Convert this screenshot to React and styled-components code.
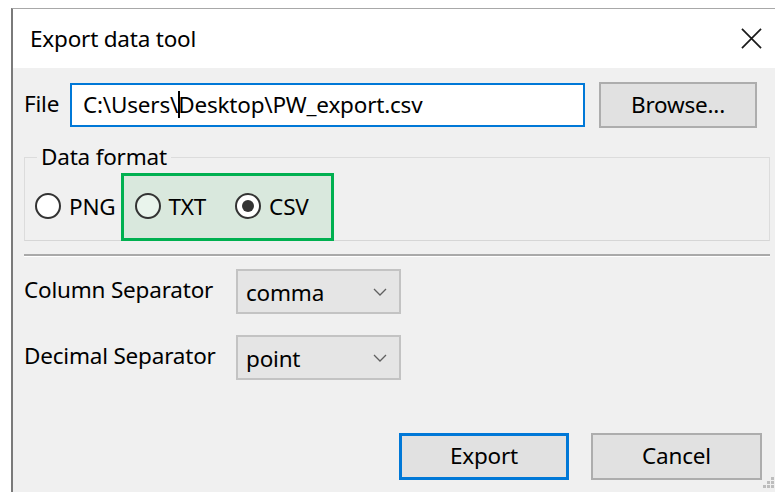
import React from 'react';
import styled, { createGlobalStyle } from 'styled-components';

// Global
const GlobalStyle = createGlobalStyle`
	html, body{
		margin: 0;
		padding: 0;
		background: #ffffff;
		overflow: hidden;
	}
	body{
		font-family: "Noto Sans", "Open Sans", sans-serif;
		color: #000000;
		line-height: 1.2;
	}
`;

// Radio
const Radio = ({ label, checked, tinted }) => (
	<RadioItem>
		<RadioCircle $checked={ checked } $tinted={ tinted } />
		<span>{ label }</span>
	</RadioItem>
);

// Combo
const Combo = ({ value }) => (
	<ComboBox>
		<span>{ value }</span>
		<svg width="14" height="8" viewBox="0 0 14 8">
			<path d="M1 1 L7 7 L13 1" fill="none" stroke="#606060" strokeWidth="1.3" />
		</svg>
	</ComboBox>
);

// Composant
const App = () => {
	return(
		<>
			<GlobalStyle/>
			<Window>

				{/* Title */}
				<TitleBar>
					<h1>Export data tool</h1>
					<svg width="21" height="21" viewBox="0 0 22 22">
						<path d="M1 1 L21 21 M21 1 L1 21" stroke="#1a1a1a" strokeWidth="1.8" />
					</svg>
				</TitleBar>
				{/* Title */}

				{/* Body */}
				<Body>

					<FileRow>
						<Label>File</Label>
						<PathInput>
							C:\Users\<Caret/>Desktop\PW_export.csv
						</PathInput>
						<Button $width={ 158 } $height={ 46 }>Browse...</Button>
					</FileRow>

					<Group>
						<legend>Data format</legend>
						<RadioRow>
							<Radio label="PNG" />
							<Highlight>
								<Radio label="TXT" tinted />
								<Radio label="CSV" checked />
							</Highlight>
						</RadioRow>
					</Group>

					<Separator/>

					<FieldRow $top={ 12 }>
						<FieldLabel>Column Separator</FieldLabel>
						<Combo value="comma" />
					</FieldRow>
					<FieldRow $top={ 21 }>
						<FieldLabel>Decimal Separator</FieldLabel>
						<Combo value="point" />
					</FieldRow>

					<Actions>
						<Button $width={ 170 } $height={ 47 } $default>Export</Button>
						<Button $width={ 171 } $height={ 47 }>Cancel</Button>
					</Actions>

				</Body>
				{/* Body */}

				<Grip>
					<svg width="12" height="12" viewBox="0 0 12 12">
						<g fill="#bdbdbd">
							<rect x="8" y="0" width="3" height="3" />
							<rect x="4" y="4" width="3" height="3" />
							<rect x="8" y="4" width="3" height="3" />
							<rect x="0" y="8" width="3" height="3" />
							<rect x="4" y="8" width="3" height="3" />
							<rect x="8" y="8" width="3" height="3" />
						</g>
					</svg>
				</Grip>

			</Window>
		</>
	);
};

// Styled
const Window = styled.div`
	position: relative;
	margin: 8px 0 0 11px;
	height: 484px;
	border-top: 1px solid #a8a8a8;
	border-left: 2px solid #7a7a7a;
	display: flex;
	flex-direction: column;
	background: #f0f0f0;
`;

const TitleBar = styled.div`
	height: 59px;
	flex-shrink: 0;
	background: #ffffff;
	display: flex;
	align-items: center;
	justify-content: space-between;
	padding: 0 13px 0 17px;
	h1{
		margin: 0;
		font-weight: 400;
		font-size: 22.5px;
		letter-spacing: -0.2px;
	}
`;

const Body = styled.div`
	flex: 1;
	padding: 14px 0 0 11px;
	display: flex;
	flex-direction: column;
	font-size: 22.5px;
	letter-spacing: -0.2px;
`;

const FileRow = styled.div`
	display: flex;
	align-items: center;
	height: 46px;
`;

const Label = styled.span`
	width: 46px;
	margin-top: -3px;
`;

const PathInput = styled.div`
	box-sizing: border-box;
	width: 515px;
	height: 44px;
	margin-right: 14px;
	padding: 0 0 2px 11px;
	display: flex;
	align-items: center;
	background: #ffffff;
	border: 2px solid #0078d7;
	white-space: pre;
`;

const Caret = styled.i`
	display: inline-block;
	width: 2px;
	height: 27px;
	margin-right: -2px;
	background: #000000;
`;

const Button = styled.div`
	box-sizing: border-box;
	width: ${ ({ $width }) => $width }px;
	height: ${ ({ $height }) => $height }px;
	display: flex;
	align-items: center;
	justify-content: center;
	padding-bottom: 2px;
	background: #e1e1e1;
	border: ${ ({ $default }) => $default ? '3px solid #0078d7' : '2px solid #adadad' };
`;

const Group = styled.fieldset`
	margin: 16px 5px 0 0;
	padding: 0 0 0 10px;
	border: 1px solid #dcdcdc;
	border-bottom-color: #d6d6d6;
	legend{
		padding: 0 4px;
		margin-left: 2px;
		line-height: 26px;
	}
`;

const RadioRow = styled.div`
	display: flex;
	align-items: stretch;
	height: 68px;
	margin: 3px 0 -1px 0;
`;

const Highlight = styled.div`
	box-sizing: border-box;
	display: flex;
	align-items: center;
	gap: 29px;
	margin-left: 5px;
	padding: 0 22px 0 11px;
	background: #d9e8dd;
	border: 3px solid #00b050;
`;

const RadioItem = styled.label`
	display: flex;
	align-items: center;
	gap: 8px;
	span{
		margin-top: -2px;
	}
`;

const RadioCircle = styled.span`
	box-sizing: border-box;
	position: relative;
	width: 26px;
	height: 26px;
	border-radius: 50%;
	border: 2px solid #333333;
	background: ${ ({ $tinted }) => $tinted ? '#e9f4ec' : '#ffffff' };
	&::after{
		content: '';
		display: ${ ({ $checked }) => $checked ? 'block' : 'none' };
		position: absolute;
		left: 5px;
		top: 5px;
		width: 12px;
		height: 12px;
		border-radius: 50%;
		background: #333333;
	}
`;

const Separator = styled.div`
	height: 2px;
	margin: 13px 5px 0 0;
	background: #a9a9a9;
	border-bottom: 1px solid #ffffff;
`;

const FieldRow = styled.div`
	display: flex;
	align-items: center;
	margin-top: ${ ({ $top }) => $top }px;
`;

const FieldLabel = styled.span`
	width: 212px;
	margin-top: -4px;
`;

const ComboBox = styled.div`
	box-sizing: border-box;
	width: 165px;
	height: 45px;
	display: flex;
	align-items: center;
	justify-content: space-between;
	padding: 0 12px 0 8px;
	background: #e5e5e5;
	border: 2px solid #c3c3c3;
	span{
		margin-top: 2px;
	}
`;

const Actions = styled.div`
	display: flex;
	gap: 22px;
	margin: 53px 0 0 375px;
`;

const Grip = styled.div`
	position: absolute;
	right: 0;
	bottom: 4px;
	line-height: 0;
`;

// Export
export default App;
